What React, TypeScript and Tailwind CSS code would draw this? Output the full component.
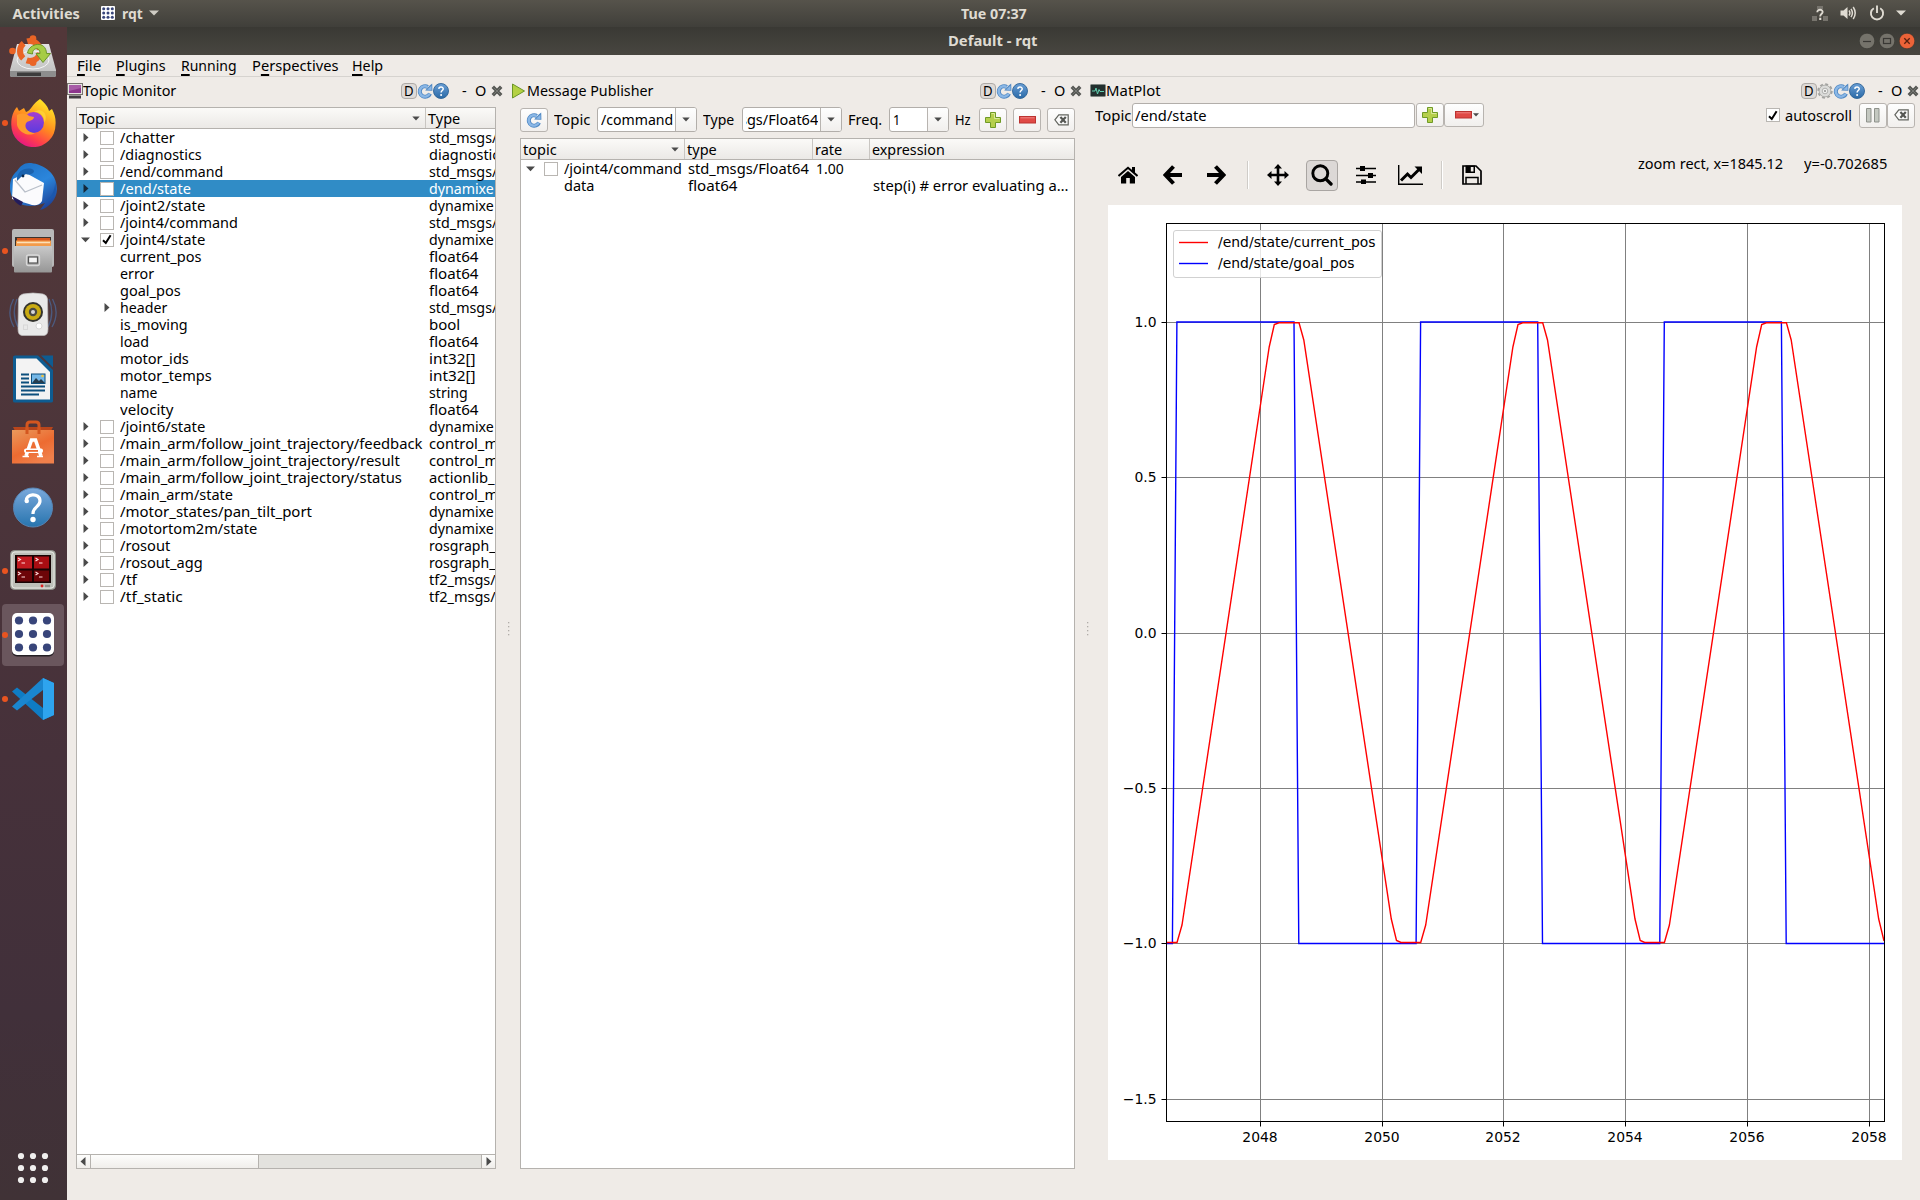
import { useLayoutEffect, useRef, useState, type ReactNode } from "react";

/* Text squeezed or stretched horizontally to a known advance width. */
function Fit({ w, className = "", children }: { w: number; className?: string; children: ReactNode }) {
  const ref = useRef<HTMLSpanElement>(null);
  const [scale, setScale] = useState(1);
  useLayoutEffect(() => {
    if (ref.current && ref.current.offsetWidth > 0) setScale(w / ref.current.offsetWidth);
  }, [w]);
  return (
    <span className={"inline-block shrink-0 whitespace-pre " + className} style={{ width: w }}>
      <span ref={ref} className="inline-block origin-left" style={{ transform: `scaleX(${scale})` }}>
        {children}
      </span>
    </span>
  );
}

/* ---------- small icons ---------- */

function Refresh({ size = 16 }: { size?: number }) {
  return (
    <svg width={size} height={size} viewBox="0 0 16 16" className="shrink-0">
      <path d="M13 10.6A5.3 5.3 0 1 1 10.8 3.9" fill="none" stroke="#4d86c2" strokeWidth="4" />
      <path d="M8.2 7.6L15.4 7.8L15.2 0.6L12.8 2.6Z" fill="#4d86c2" />
      <path d="M12.6 10.7A5.2 5.2 0 1 1 10.6 4" fill="none" stroke="#8ab7e6" strokeWidth="2.4" />
      <path d="M10 6.8L14.600 7L14.500 2.400Z" fill="#8ab7e6" />
    </svg>
  );
}

function HelpBall() {
  return (
    <svg width="16" height="16" viewBox="0 0 16 16" className="shrink-0">
      <defs>
        <linearGradient id="hb" x1="0" y1="0" x2="0" y2="1">
          <stop offset="0" stopColor="#6a9fd6" />
          <stop offset="1" stopColor="#2a69a6" />
        </linearGradient>
      </defs>
      <circle cx="8" cy="8" r="7.5" fill="url(#hb)" stroke="#2f6497" strokeWidth="0.9" />
      <path d="M5.8 5.9C5.9 3.4 10.3 3.4 10.2 6C10.1 7.6 8.1 7.6 8.1 9.6" fill="none" stroke="#fff" strokeWidth="1.5" />
      <circle cx="8.1" cy="11.9" r="1" fill="#fff" />
    </svg>
  );
}

function CrossIcon() {
  return (
    <svg width="12" height="12" viewBox="0 0 12 12" className="shrink-0">
      <path d="M1.8 1.8L10.2 10.2M10.2 1.8L1.8 10.2" stroke="#555753" strokeWidth="3.5" />
      <path d="M2.6 2.6L9.4 9.4M9.4 2.6L2.6 9.4" stroke="#777975" strokeWidth="1" />
    </svg>
  );
}

function Gear() {
  return (
    <svg width="16" height="16" viewBox="0 0 16 16" className="shrink-0">
      <circle cx="8" cy="8" r="6.6" fill="none" stroke="#a3a3a0" strokeWidth="2.2" strokeDasharray="2.9 2.283" />
      <circle cx="8" cy="8" r="5.9" fill="#dcdcda" stroke="#a8a8a5" strokeWidth="0.9" />
      <circle cx="8" cy="8" r="2.8" fill="#efefed" stroke="#a4a4a2" strokeWidth="0.8" />
      <circle cx="8" cy="8" r="1" fill="#8f8f8d" />
    </svg>
  );
}

function Plus() {
  return (
    <svg width="18" height="18" viewBox="0 0 18 18">
      <path d="M6.5 1.5h5v5h5v5h-5v5h-5v-5h-5v-5h5z" fill="#b5cf4c" stroke="#6f9a26" />
      <path d="M7.5 2.5h3v5h5" fill="none" stroke="#dbe89a" />
    </svg>
  );
}

function Minus() {
  return (
    <svg width="17" height="8" viewBox="0 0 17 8">
      <rect x="0.5" y="0.5" width="16" height="6.5" fill="#e04a46" stroke="#bb3330" />
      <path d="M1.5 1.8h14" stroke="#ee8280" />
    </svg>
  );
}

function ClearIcon() {
  return (
    <svg width="15" height="12" viewBox="0 0 15 12">
      <path d="M4.8 0.8H14.2V10.8H4.8L0.9 5.8Z" fill="#fafafa" stroke="#63655f" strokeWidth="1.2" />
      <path d="M6.4 3L11.8 8.8M11.8 3L6.4 8.8" stroke="#555753" strokeWidth="2.2" />
    </svg>
  );
}

function Check({ on = false }: { on?: boolean }) {
  return (
    <span className="box-border inline-flex h-3.5 w-3.5 shrink-0 items-center justify-center border border-[#b9b6b2] bg-white">
      {on && (
        <svg width="10" height="11" viewBox="0 0 10 11">
          <path d="M1 6.2L3.8 9L8.6 1.2" fill="none" stroke="#000" strokeWidth="2" />
        </svg>
      )}
    </span>
  );
}

function Tri({ dir, dark = false }: { dir: "r" | "d" | "l"; dark?: boolean }) {
  const d = { r: "M2.5 0L7.5 4.5L2.5 9Z", d: "M0 2.5H9L4.5 7.2Z", l: "M6.5 0L1.5 4.5L6.5 9Z" }[dir];
  return (
    <svg width="9" height="9" viewBox="0 0 9 9" className="shrink-0">
      <path d={d} fill={dark ? "#14293a" : "#4a4a4a"} />
    </svg>
  );
}

function SmallDown() {
  return (
    <svg width="8" height="5" viewBox="0 0 8 5" className="shrink-0">
      <path d="M0.3 0.4H7.7L4 4.6Z" fill="#4a4a4a" />
    </svg>
  );
}

/* ---------- dock ---------- */

const dockIcons: { running?: boolean; active?: boolean; icon: ReactNode }[] = [
  {
    icon: (
      <svg width="48" height="48" viewBox="0 0 48 48">
        <defs>
          <linearGradient id="disk" x1="0" y1="0" x2="0" y2="1">
            <stop offset="0" stopColor="#e2e2e2" />
            <stop offset="1" stopColor="#bcbcbc" />
          </linearGradient>
        </defs>
        <path d="M8 9H40L47 35V40Q47 42 45 42H3Q1 42 1 40V35Z" fill="url(#disk)" />
        <path d="M1 36H47V40Q47 42 45 42H3Q1 42 1 40Z" fill="#8d8d8d" />
        <rect x="8" y="37.5" width="24" height="3.5" fill="#3c3c3c" />
        <ellipse cx="24" cy="25" rx="16" ry="9" fill="none" stroke="#f5f5f5" strokeWidth="1" />
        <circle cx="21" cy="16" r="10" fill="none" stroke="#ea6425" strokeWidth="6" strokeDasharray="17 4" strokeDashoffset="-2" />
        <circle cx="24" cy="3.5" r="3.3" fill="#ea6425" />
        <circle cx="3.5" cy="16" r="3.3" fill="#ea6425" />
        <circle cx="24" cy="27.5" r="3.5" fill="#ea6425" />
        <path d="M18.5 18C20 8 37 5 37.5 18.5H41.5L34 27.5L27 18.5H31C31 11 23 13 23.5 19Z" fill="#a6cc45" stroke="#6b9628" />
      </svg>
    ),
  },
  {
    running: true,
    icon: (
      <svg width="48" height="48" viewBox="0 0 48 48">
        <defs>
          <linearGradient id="ff" x1="0.8" y1="0.1" x2="0.3" y2="1">
            <stop offset="0" stopColor="#ffe226" />
            <stop offset="0.45" stopColor="#ff8a1f" />
            <stop offset="0.75" stopColor="#ff3f4b" />
            <stop offset="1" stopColor="#e31587" />
          </linearGradient>
          <linearGradient id="ffp" x1="0.5" y1="0" x2="0.5" y2="1">
            <stop offset="0" stopColor="#a63fd0" />
            <stop offset="1" stopColor="#5a3be0" />
          </linearGradient>
        </defs>
        <path d="M31 0C37 5 39 8 40 12L43 10C46 16 47 20 46.500 26A22 22 0 0 1 2.300 26C2 19 4 12 8 8L10 12L15 9L17 13C22 12 23 5 31 0Z" fill="url(#ff)" />
        <circle cx="24.500" cy="23.500" r="10.500" fill="url(#ffp)" />
        <path d="M8 16C13 14 17 14 20 17L25 18C25 21 20 22 18 23C14 27 18 34 26 34C20 38 10 34 8 26Z" fill="#ff9a2c" />
        <path d="M24 13C30 12 36 17 35.500 24C39 15 35 12 30 11Z" fill="#ffcf34" />
      </svg>
    ),
  },
  {
    icon: (
      <svg width="48" height="48" viewBox="0 0 48 48">
        <defs>
          <linearGradient id="tb" x1="0.2" y1="0" x2="0.8" y2="1">
            <stop offset="0" stopColor="#1f70c4" />
            <stop offset="0.5" stopColor="#2b86dc" />
            <stop offset="1" stopColor="#1d3e93" />
          </linearGradient>
        </defs>
        <path d="M20 0C31 0 48 8 48 26C48 36 40 45 31 47L36 40C20 46 8 42 3 34C-1 24 1 14 8 8C11 3 15 0 20 0Z" fill="url(#tb)" />
        <path d="M4 16L17 10L35 20L33 38C30 43 25 43 20 41L3 36Z" fill="#fbfbfd" />
        <path d="M6 17L16 29L33 22" fill="none" stroke="#b9bfc9" strokeWidth="1.300" />
        <path d="M8 18C7 8 16 4 23 6C29 9 20 13 17 11L12 14Z" fill="#1b62ae" />
        <circle cx="14" cy="13" r="1.400" fill="#0d2a4d" />
        <path d="M3 33L14 39L12 43C8 41 5 38 3 33Z" fill="#231c5c" />
        <path d="M46 16C47 26 43 34 36 39C42 38 46 33 47 27" fill="#1a58ae" />
      </svg>
    ),
  },
  {
    running: true,
    icon: (
      <svg width="48" height="48" viewBox="0 0 48 48">
        <defs>
          <linearGradient id="cab" x1="0" y1="0" x2="0" y2="1">
            <stop offset="0" stopColor="#c9c9c9" />
            <stop offset="1" stopColor="#969696" />
          </linearGradient>
        </defs>
        <rect x="3" y="2" width="42" height="38" rx="2" fill="#b8b8b8" />
        <rect x="6" y="10" width="36" height="12" fill="#3b332e" />
        <rect x="8" y="11" width="33" height="3" fill="#d8581e" />
        <rect x="7" y="13.500" width="35" height="6" fill="#f39b4a" />
        <path d="M8 15.500H41" stroke="#fce0b8" strokeWidth="1.500" />
        <rect x="5" y="19" width="38" height="26.500" rx="1" fill="url(#cab)" />
        <rect x="17.500" y="28" width="13" height="10.500" rx="2" fill="none" stroke="#d7d7d7" strokeWidth="1.300" />
        <rect x="19.500" y="30" width="9" height="6" fill="#f4f4f4" stroke="#555" strokeWidth="1.200" />
      </svg>
    ),
  },
  {
    icon: (
      <svg width="48" height="48" viewBox="0 0 48 48">
        <g fill="none" stroke="#4c5b80" strokeWidth="1.300">
          <path d="M8 8Q2 22 9 36M4.500 8Q-3 22 5 36M40 8Q46 22 39 36M43.500 8Q51 22 43 36" />
        </g>
        <path d="M14 3Q24 1 34 3Q38 4 38.500 8L39 38Q39 44 35 44.500H13Q9 44 9 38L9.500 8Q10 4 14 3Z" fill="#e9e9e9" stroke="#bdbdbd" strokeWidth="0.700" />
        <circle cx="24" cy="21" r="10" fill="#33332e" />
        <circle cx="24" cy="21" r="8" fill="#c9ab12" />
        <circle cx="24" cy="21" r="4.200" fill="#4a4a43" />
        <circle cx="24" cy="21" r="2" fill="#d8d8d8" />
        <circle cx="30" cy="35" r="3" fill="#fff" stroke="#d0d0d0" strokeWidth="0.800" />
        <rect x="14.500" y="34" width="4" height="4.500" fill="none" stroke="#d8d8d8" />
      </svg>
    ),
  },
  {
    icon: (
      <svg width="48" height="48" viewBox="0 0 48 48">
        <path d="M4 2Q4 0.500 6 0.500H29L44 15V46Q44 47.500 42 47.500H6Q4 47.500 4 46Z" fill="#0e5c91" />
        <path d="M7 3.500H27.500L41 17V44.500H7Z" fill="#f3f3f3" />
        <path d="M32 0.500H44V12.500Z" fill="#0e5c91" />
        <g stroke="#0c4f7d" strokeWidth="1.800">
          <path d="M12 19.500H20M12 23.500H20M12 27.500H20M12 31.500H36M12 35.500H36M12 39.500H30" />
        </g>
        <rect x="22.500" y="19" width="13.500" height="9.500" fill="#74b7e6" stroke="#0c4f7d" />
        <path d="M23 28L27 23L30 26L32 24L36 28Z" fill="#263d4e" />
        <circle cx="33.500" cy="21" r="1.300" fill="#f3c33b" />
      </svg>
    ),
  },
  {
    icon: (
      <svg width="48" height="48" viewBox="0 0 48 48">
        <defs>
          <linearGradient id="bag" x1="0" y1="0" x2="0.600" y2="1">
            <stop offset="0" stopColor="#e99a5c" />
            <stop offset="0.600" stopColor="#ed6b31" />
            <stop offset="1" stopColor="#f0804b" />
          </linearGradient>
        </defs>
        <path d="M4 8H44L42 12H6Z" fill="#b8451b" />
        <path d="M18 12V6Q18 3 21 3H27Q30 3 30 6V12" fill="none" stroke="#d4561f" strokeWidth="3" />
        <path d="M3 11H45V44.500H3Z" fill="url(#bag)" />
        <path d="M18 15V9M30 15V9" stroke="#d4561f" strokeWidth="3" />
        <path d="M17 37L22.500 21H26.500L32 37" fill="none" stroke="#fff" strokeWidth="3.600" />
        <rect x="15" y="29.500" width="19" height="4.500" rx="2" fill="#fff" />
        <rect x="17" y="31" width="12" height="1.800" fill="#ed6b31" />
        <path d="M13.500 37.500H20M28 37.500H34" stroke="#fff" strokeWidth="1.600" />
      </svg>
    ),
  },
  {
    icon: (
      <svg width="48" height="48" viewBox="0 0 48 48">
        <defs>
          <linearGradient id="hp" x1="0" y1="0" x2="0" y2="1">
            <stop offset="0" stopColor="#7aa9dc" />
            <stop offset="1" stopColor="#2774ae" />
          </linearGradient>
        </defs>
        <circle cx="24" cy="24.500" r="19.500" fill="url(#hp)" stroke="#5784b3" />
        <path d="M17.500 19C15.500 10.500 31 9 31 18C31 24 23.500 24 24 31" fill="none" stroke="#fff" strokeWidth="3.200" />
        <circle cx="17.800" cy="18" r="2.200" fill="#fff" />
        <circle cx="24" cy="36.500" r="2.700" fill="#fff" />
      </svg>
    ),
  },
  {
    running: true,
    icon: (
      <svg width="48" height="48" viewBox="0 0 48 48">
        <rect x="1.500" y="3.500" width="45" height="39" rx="4" fill="#bdbfb8" stroke="#8c8e87" />
        <rect x="3" y="5" width="42" height="36" rx="3" fill="none" stroke="#e5e6e1" />
        <rect x="6" y="8" width="36" height="28" fill="#170404" />
        <rect x="8" y="9.500" width="15" height="12" fill="#c21a20" />
        <rect x="25" y="9.500" width="15" height="12" fill="#a80d12" />
        <rect x="8" y="23.500" width="15" height="11" fill="#6d0508" />
        <rect x="25" y="23.500" width="15" height="11" fill="#6d0508" />
        <g stroke="#ffdcdc" strokeWidth="1.100" fill="none">
          <path d="M9 11l2.500 1.500L9 14M12.500 16H16M26.500 11l2.500 1.500L26.500 14M30 16H33.500M9 25l2.500 1.500L9 28M12.500 30H16M26.500 25l2.500 1.500L26.500 28M30 30H33.500" />
        </g>
        <circle cx="33" cy="39" r="1.400" fill="#e02020" />
        <rect x="36" y="37.800" width="5" height="2.400" fill="#8f918a" />
      </svg>
    ),
  },
  {
    running: true,
    active: true,
    icon: (
      <svg width="48" height="48" viewBox="0 0 48 48">
        <rect x="3" y="2.500" width="42" height="43" rx="5" fill="#241f24" />
        <rect x="3" y="2" width="42" height="42" rx="5" fill="#fff" />
        {[10, 24, 38].map((x) => [9.5, 23, 36.500].map((y) => <circle key={x + "-" + y} cx={x} cy={y} r="4.100" fill="#38457a" />))}
      </svg>
    ),
  },
  {
    running: true,
    icon: (
      <svg width="48" height="48" viewBox="0 0 48 48">
        <path d="M34 3L45 8V40L34 45L3 16.500L8 12.500L34 33Z" fill="#0f7cc4" />
        <path d="M34 3L3 31.500L8 35.500L34 15Z" fill="#1a86cf" />
        <path d="M34 3L45 8V40L34 45Z" fill="#2ea4ee" />
      </svg>
    ),
  },
];

function Dock() {
  return (
    <aside className="flex w-[67px] shrink-0 flex-col bg-[linear-gradient(180deg,#523739_0%,#4e363a_30%,#46313a_62%,#41303a_84%,#403236_100%)]">
      {dockIcons.map((d, i) => (
        <div key={i} className="flex h-16 items-center">
          <span className={"ml-0.5 h-1.5 w-1.5 rounded-full " + (d.running ? "relative z-10 bg-[#e95420]" : "")} />
          <span
            className={
              "-ml-1.5 flex h-[62px] w-[62px] items-center justify-center rounded " + (d.active ? "bg-[#6a565d]" : "")
            }
          >
            {d.icon}
          </span>
        </div>
      ))}
      <div className="mt-auto mr-0.5 mb-4 flex justify-center">
        <svg width="32" height="32" viewBox="0 0 32 32">
          {[4, 16, 28].map((x) => [4, 16, 28].map((y) => <circle key={x + "-" + y} cx={x} cy={y} r="3.100" fill="#f0efee" />))}
        </svg>
      </div>
    </aside>
  );
}

/* ---------- top bar ---------- */

function TopBar() {
  return (
    <header className="flex h-[27px] items-center bg-[linear-gradient(180deg,#56534b,#403f3a)] pb-px text-[14.5px] font-bold text-[#dfdbd2]">
      <Fit w={67} className="ml-[12.5px]">Activities</Fit>
      <svg width="14" height="14" viewBox="0 0 14 14" className="ml-[21.5px]">
        <rect width="14" height="14" rx="1" fill="#fff" />
        {[2.7, 7, 11.300].map((x) => [2.7, 7, 11.300].map((y) => <circle key={x + "-" + y} cx={x} cy={y} r="1.500" fill="#38457a" />))}
      </svg>
      <Fit w={21} className="ml-[7px]">rqt</Fit>
      <svg width="10" height="6" viewBox="0 0 10 6" className="ml-1.5">
        <path d="M0 0.500H10L5 5.500Z" fill="#cfccc4" />
      </svg>
      <Fit w={66} className="ml-[802px]">Tue 07:37</Fit>
      <div className="ml-auto flex items-center">
        <svg width="17" height="17" viewBox="0 0 17 17">
          <path d="M0 11h5v5H0zM11 11h5v5h-5zM5 1h6v3H5z" fill="#77746d" />
          <path d="M5.300 7.300C5.300 3.700 11 4 10.600 7.200C10.300 9.200 8.200 9 8.200 11.400" fill="none" stroke="#dfdbd2" strokeWidth="1.900" />
          <rect x="7.200" y="12.700" width="2.100" height="2.300" fill="#dfdbd2" />
        </svg>
        <svg width="17" height="16" viewBox="0 0 17 16" className="ml-[11px]">
          <path d="M0.500 5.500H3.500L7.500 2V14L3.500 10.500H0.500Z" fill="#dfdbd2" />
          <path d="M9 5.500Q10.800 8 9 10.500M11 3.800Q13.800 8 11 12.200M13.200 2Q17.200 8 13.200 14" fill="none" stroke="#dfdbd2" strokeWidth="1.500" />
        </svg>
        <svg width="16" height="16" viewBox="0 0 16 16" className="ml-3">
          <path d="M4.800 3.200A6.100 6.100 0 1 0 11.200 3.200M8 0.500V8" fill="none" stroke="#dfdbd2" strokeWidth="1.900" />
        </svg>
        <svg width="10" height="6" viewBox="0 0 10 6" className="mr-[14px] ml-[11px]">
          <path d="M0 0.500H10L5 5.500Z" fill="#dfdbd2" />
        </svg>
      </div>
    </header>
  );
}

function TitleBar() {
  return (
    <div className="flex h-7 items-center bg-[linear-gradient(180deg,#3a3934,#484640)] pb-px text-[14.5px] font-bold text-[#dfdbd2]">
      <Fit w={89} className="ml-[881px]">Default - rqt</Fit>
      <div className="mr-[5px] ml-auto flex gap-1">
        <svg width="16" height="18" viewBox="0 0 16 18">
          <circle cx="8" cy="9" r="7.800" fill="#75736b" stroke="#33322e" strokeWidth="0.600" />
          <path d="M4 9.500H12" stroke="#393834" strokeWidth="1.200" />
        </svg>
        <svg width="16" height="18" viewBox="0 0 16 18">
          <circle cx="8" cy="9" r="7.800" fill="#75736b" stroke="#33322e" strokeWidth="0.600" />
          <rect x="4.500" y="6.500" width="7" height="5" fill="none" stroke="#393834" strokeWidth="1.200" />
        </svg>
        <svg width="16" height="18" viewBox="0 0 16 18">
          <circle cx="8" cy="9" r="7.800" fill="#ec6338" stroke="#33322e" strokeWidth="0.600" />
          <path d="M5.300 6.300L10.700 11.700M10.700 6.300L5.300 11.700" stroke="#57200f" strokeWidth="1.300" />
        </svg>
      </div>
    </div>
  );
}

const U = ({ children }: { children: string }) => (
  <span className="underline decoration-[1.5px] underline-offset-[3px]">{children}</span>
);

function MenuBar() {
  return (
    <nav className="flex h-[22px] items-center border-b border-[#d6d3cf] pl-2.5">
      <Fit w={24}><U>F</U>ile</Fit>
      <Fit w={49.5} className="ml-[15px]"><U>P</U>lugins</Fit>
      <Fit w={56} className="ml-[15px]"><U>R</U>unning</Fit>
      <Fit w={86} className="ml-[15px]">P<U>e</U>rspectives</Fit>
      <Fit w={31.5} className="ml-3.5"><U>H</U>elp</Fit>
    </nav>
  );
}

/* ---------- dock widget title ---------- */

function PanelTitle({ icon, title, w, gear = false }: { icon: ReactNode; title: string; w: number; gear?: boolean }) {
  return (
    <div className="flex h-[27px] items-center">
      {icon}
      <Fit w={w}>{title}</Fit>
      <span className="ml-auto flex h-4 w-4 items-center justify-center rounded-sm border border-[#aeaaa6] bg-[#dedad7]">
        <Fit w={10}>D</Fit>
      </span>
      {gear && <Gear />}
      <Refresh />
      <HelpBall />
      <Fit w={5} className="ml-[13px]">-</Fit>
      <Fit w={11} className="mr-[5px] ml-2">O</Fit>
      <CrossIcon />
    </div>
  );
}

/* ---------- topic monitor ---------- */

type Row = { name: string; w: number; type: string; tw: number; kind?: "child" | "childOpen" | "open"; selected?: boolean };

const rows: Row[] = [
  { name: "/chatter", w: 54.7, type: "std_msgs/", tw: 68 },
  { name: "/diagnostics", w: 82, type: "diagnostic", tw: 70 },
  { name: "/end/command", w: 103.5, type: "std_msgs/", tw: 68 },
  { name: "/end/state", w: 71.5, type: "dynamixe", tw: 64.5, selected: true },
  { name: "/joint2/state", w: 85, type: "dynamixe", tw: 64.5 },
  { name: "/joint4/command", w: 117.5, type: "std_msgs/", tw: 68 },
  { name: "/joint4/state", w: 85, type: "dynamixe", tw: 64.5, kind: "open" },
  { name: "current_pos", w: 81.5, type: "float64", tw: 49, kind: "child" },
  { name: "error", w: 34.5, type: "float64", tw: 49, kind: "child" },
  { name: "goal_pos", w: 61, type: "float64", tw: 49, kind: "child" },
  { name: "header", w: 47, type: "std_msgs/", tw: 68, kind: "childOpen" },
  { name: "is_moving", w: 67.5, type: "bool", tw: 31, kind: "child" },
  { name: "load", w: 29.5, type: "float64", tw: 49, kind: "child" },
  { name: "motor_ids", w: 68.5, type: "int32[]", tw: 46.5, kind: "child" },
  { name: "motor_temps", w: 92, type: "int32[]", tw: 46.5, kind: "child" },
  { name: "name", w: 37.5, type: "string", tw: 39, kind: "child" },
  { name: "velocity", w: 53, type: "float64", tw: 49, kind: "child" },
  { name: "/joint6/state", w: 85, type: "dynamixe", tw: 64.5 },
  { name: "/main_arm/follow_joint_trajectory/feedback", w: 303, type: "control_m", tw: 69 },
  { name: "/main_arm/follow_joint_trajectory/result", w: 279.5, type: "control_m", tw: 69 },
  { name: "/main_arm/follow_joint_trajectory/status", w: 282, type: "actionlib_", tw: 66 },
  { name: "/main_arm/state", w: 113, type: "control_m", tw: 69 },
  { name: "/motor_states/pan_tilt_port", w: 192, type: "dynamixe", tw: 64.5 },
  { name: "/motortom2m/state", w: 137, type: "dynamixe", tw: 64.5 },
  { name: "/rosout", w: 50.5, type: "rosgraph_", tw: 66 },
  { name: "/rosout_agg", w: 82.5, type: "rosgraph_", tw: 66 },
  { name: "/tf", w: 17.5, type: "tf2_msgs/", tw: 67 },
  { name: "/tf_static", w: 62.5, type: "tf2_msgs/", tw: 67 },
];

function TopicMonitor() {
  return (
    <section className="flex w-[436px] shrink-0 flex-col">
      <PanelTitle
        title="Topic Monitor"
        w={93.5}
        icon={
          <svg width="16" height="16" viewBox="0 0 16 16">
            <rect x="0.500" y="0.500" width="15" height="11" fill="#e6e3e1" stroke="#77736f" />
            <rect x="2" y="2" width="12" height="8" fill="#8c358c" />
            <path d="M2 2H14V5L2 8Z" fill="#a75ba7" />
            <rect x="2" y="12.500" width="12" height="3" fill="#413d41" />
          </svg>
        }
      />
      <div className="mt-[3px] ml-[9px] flex h-[1062px] w-[420px] flex-col overflow-hidden border border-[#b5b2ae] bg-white">
        <div className="flex h-[21px] shrink-0 items-center border-b border-[#b5b2ae] bg-[linear-gradient(180deg,#fbfaf8,#ebe9e6)]">
          <div className="flex h-full w-[349px] items-center justify-between border-r border-[#c9c6c2] pr-[5px] pl-0.5">
            <Fit w={35.5}>Topic</Fit>
            <SmallDown />
          </div>
          <Fit w={32} className="ml-0.5">Type</Fit>
        </div>
        {rows.map((r) => (
          <div
            key={r.name}
            className={"flex h-[17px] shrink-0 items-center " + (r.selected ? "bg-[#308cc6] text-white" : "")}
          >
            <span className="flex w-[43px] shrink-0 items-center pl-1">
              {r.kind === "childOpen" && (
                <span className="ml-[21px] flex"><Tri dir="r" /></span>
              )}
              {!r.kind?.startsWith("child") && (
                <>
                  <Tri dir={r.kind === "open" ? "d" : "r"} dark={r.selected} />
                  <span className="ml-2.5 flex"><Check on={r.kind === "open"} /></span>
                </>
              )}
            </span>
            <span className="flex w-[309px] shrink-0"><Fit w={r.w}>{r.name}</Fit></span>
            <Fit w={r.tw}>{r.type}</Fit>
          </div>
        ))}
        <div className="mt-auto flex h-[14px] shrink-0 border-t border-[#b5b2ae] bg-[#e3e2de]">
          <div className="flex w-3.5 items-center justify-center border-r border-[#b5b2ae] bg-[linear-gradient(180deg,#fdfdfc,#f0eeeb)]"><Tri dir="l" /></div>
          <div className="w-[168px] border-r border-[#b5b2ae] bg-[linear-gradient(180deg,#fdfdfc,#f0eeeb)]" />
          <div className="ml-auto flex w-3.5 items-center justify-center border-l border-[#b5b2ae] bg-[linear-gradient(180deg,#fdfdfc,#f0eeeb)] pr-px"><Tri dir="r" /></div>
        </div>
      </div>
    </section>
  );
}

/* ---------- message publisher ---------- */

const btn = "flex shrink-0 items-center justify-center rounded-[3px] border border-[#b8b4b0] bg-[linear-gradient(180deg,#fefefe,#f1efed)] ";

function Combo({ children, end = false, className }: { children: ReactNode; end?: boolean; className: string }) {
  return (
    <div className={"flex h-[25px] shrink-0 overflow-hidden rounded-[3px] border border-[#b2aeaa] bg-white " + className}>
      <div className={"mr-0.5 ml-[3px] flex min-w-0 flex-1 items-center overflow-hidden " + (end ? "justify-end" : "")}>{children}</div>
      <div className="flex w-[21px] shrink-0 items-center justify-center border-l border-[#b8b4b0] bg-[linear-gradient(180deg,#fefefe,#f1efed)] pr-px">
        <SmallDown />
      </div>
    </div>
  );
}

function Publisher() {
  return (
    <section className="ml-2 flex w-[571px] shrink-0 flex-col">
      <PanelTitle
        title="Message Publisher"
        w={126}
        icon={
          <svg width="15" height="16" viewBox="0 0 15 16" className="mr-[1px]">
            <path d="M1.500 1V15L13.500 8Z" fill="#b4d143" stroke="#6b9628" />
          </svg>
        }
      />
      <div className="ml-[9px] flex w-[555px] flex-col">
        <div className="mt-[3px] flex h-[25px] items-center">
          <div className={btn + "h-6 w-7"}><Refresh /></div>
          <Fit w={36} className="ml-[6px]">Topic</Fit>
          <Combo end className="ml-[7px] w-[100px]"><Fit w={72}>/command</Fit></Combo>
          <Fit w={31} className="ml-[6px]">Type</Fit>
          <Combo end className="ml-[8px] w-[100px]"><Fit w={78}>sgs/Float64</Fit></Combo>
          <Fit w={34} className="ml-[6px]">Freq.</Fit>
          <Combo className="ml-[7px] w-[60px]"><Fit w={7}>1</Fit></Combo>
          <Fit w={16} className="ml-[6px]">Hz</Fit>
          <div className={btn + "ml-[8px] h-6 w-7"}><Plus /></div>
          <div className={btn + "ml-[6px] h-6 w-7"}><Minus /></div>
          <div className={btn + "ml-[6px] h-6 w-7"}><ClearIcon /></div>
        </div>
        <div className="mt-[6px] flex h-[1031px] flex-col border border-[#b5b2ae] bg-white">
          <div className="flex h-[21px] shrink-0 items-center border-b border-[#b5b2ae] bg-[linear-gradient(180deg,#fbfaf8,#ebe9e6)]">
            <div className="flex h-full w-[164px] items-center justify-between border-r border-[#c9c6c2] pr-[5px] pl-0.5">
              <Fit w={34}>topic</Fit>
              <SmallDown />
            </div>
            <div className="flex h-full w-32 items-center border-r border-[#c9c6c2] pl-0.5"><Fit w={30}>type</Fit></div>
            <div className="flex h-full w-[57px] items-center border-r border-[#c9c6c2] pl-0.5"><Fit w={27}>rate</Fit></div>
            <Fit w={73} className="ml-0.5">expression</Fit>
          </div>
          <div className="flex h-[17px] items-center">
            <span className="flex w-[43px] items-center pl-[5px]">
              <Tri dir="d" />
              <span className="ml-[9px] flex"><Check /></span>
            </span>
            <span className="flex w-[124px]"><Fit w={117.5}>/joint4/command</Fit></span>
            <span className="flex w-[128px]"><Fit w={120.5}>std_msgs/Float64</Fit></span>
            <Fit w={28}>1.00</Fit>
          </div>
          <div className="flex h-[17px] items-center">
            <span className="ml-[43px] flex w-[124px]"><Fit w={30}>data</Fit></span>
            <span className="flex w-[185px]"><Fit w={49}>float64</Fit></span>
            <Fit w={195}>step(i) # error evaluating a…</Fit>
          </div>
        </div>
      </div>
    </section>
  );
}

/* ---------- MatPlot ---------- */

const currentPos =
  "M1166.500 942.500H1177" +
  [0, 243.7, 487.4]
    .map((o) =>
      [
        [1177, 942.5], [1182, 925], [1269.2, 347], [1274.3, 324.5], [1279, 322.8], [1299, 322.8], [1303.8, 340],
        [1391.3, 919], [1396.5, 940.5], [1401, 942.5],
      ]
        .map(([x, y]) => `L${x + o} ${y}`)
        .join("")
    )
    .join("");

const goalPos =
  "M1166.500 943.500" +
  [0, 243.7, 487.4]
    .map((o) => `L${1172.4 + o} 943.500L${1176.9 + o} 322L${1294 + o} 322L${1298.8 + o} 943.500`)
    .join("") +
  "L1884.500 943.500";

const xTicks: [number, string][] = [
  [1260.5, "2048"], [1382.5, "2050"], [1503.5, "2052"], [1625.5, "2054"], [1747.5, "2056"], [1869.5, "2058"],
];
const yTicks: [number, string][] = [
  [322.5, "1.0"], [477.5, "0.5"], [633.5, "0.0"], [788.5, "−0.5"], [943.5, "−1.0"], [1099.5, "−1.5"],
];

function Chart() {
  return (
    <svg width="794" height="955" viewBox="1108 205 794 955" className="ml-[18px] shrink-0 bg-white" fontFamily="DejaVu Sans" fontSize="13.900">
      <defs>
        <clipPath id="axes"><rect x="1166.500" y="223.500" width="718" height="898" /></clipPath>
      </defs>
      <g stroke="#808080" strokeWidth="1">
        {xTicks.map(([x]) => <path key={x} d={`M${x} 223.500V1121.500`} />)}
        {yTicks.map(([y]) => <path key={y} d={`M1166.500 ${y}H1884.500`} />)}
      </g>
      <g clipPath="url(#axes)" fill="none" strokeWidth="1.400">
        <path d={goalPos} stroke="#0000ff" />
        <path d={currentPos} stroke="#ff0000" />
      </g>
      <rect x="1166.500" y="223.500" width="718" height="898" fill="none" stroke="#000" />
      {xTicks.map(([x, t]) => (
        <g key={t}>
          <path d={`M${x} 1121.500v5`} stroke="#000" />
          <text x={x - 0.5} y="1142" textAnchor="middle">{t}</text>
        </g>
      ))}
      {yTicks.map(([y, t]) => (
        <g key={t}>
          <path d={`M1161.500 ${y}h5`} stroke="#000" />
          <text x="1156.500" y={y + 4.500} textAnchor="end">{t}</text>
        </g>
      ))}
      <rect x="1173.500" y="230.500" width="208" height="47" rx="2.500" fill="#fff" fillOpacity="0.800" stroke="#ccc" strokeOpacity="0.900" />
      <path d="M1179 242.500H1208" stroke="#ff0000" strokeWidth="1.400" />
      <path d="M1179 263.500H1208" stroke="#0000ff" strokeWidth="1.400" />
      <text x="1218" y="247" textLength="157.500">/end/state/current_pos</text>
      <text x="1218" y="268" textLength="136.500">/end/state/goal_pos</text>
    </svg>
  );
}

function PlotToolbar() {
  return (
    <div className="mt-[30px] flex h-[47px] items-center pb-[13px]">
      <svg width="20" height="18" viewBox="0 0 20 18" className="ml-7">
        <path d="M0.500 10L10 1.800L19.500 10" fill="none" stroke="#000" strokeWidth="2" />
        <path d="M14 1H17V7.500L14 5Z" />
        <path d="M10 5L17 11V17.500H11.800V12H8.200V17.500H3V11Z" />
      </svg>
      <svg width="20" height="20" viewBox="0 0 20 20" className="ml-[25px]">
        <path d="M10.500 1.500L2.500 10L10.500 18.500M3 10H19" fill="none" stroke="#000" strokeWidth="4" />
      </svg>
      <svg width="20" height="20" viewBox="0 0 20 20" className="ml-[22.500px]">
        <path d="M9.500 1.500L17.500 10L9.500 18.500M17 10H1" fill="none" stroke="#000" strokeWidth="4" />
      </svg>
      <span className="ml-[21.500px] h-7 w-0.5 border-l border-[#cfccc8] bg-white" />
      <svg width="22" height="22" viewBox="0 0 22 22" className="ml-[18px]">
        <path d="M11 3V19M3 11H19" stroke="#000" strokeWidth="2.600" />
        <path d="M11 0L15 4.500H7ZM11 22L7 17.500H15ZM0 11L4.500 7V15ZM22 11L17.500 15V7Z" />
      </svg>
      <span className="ml-[17px] flex h-[31px] w-8 items-center justify-center rounded-sm border border-[#a9a5a2] bg-[#dcd8d6]">
        <svg width="22" height="22" viewBox="0 0 22 22">
          <circle cx="9.300" cy="9.300" r="7.500" fill="none" stroke="#000" strokeWidth="2.900" />
          <path d="M14.800 14.800L20 20" stroke="#000" strokeWidth="3.300" strokeLinecap="round" />
        </svg>
      </span>
      <svg width="20" height="18" viewBox="0 0 20 18" className="ml-[18px]">
        <path d="M0 2.500H20M0 9.500H20M0 16H20" stroke="#000" strokeWidth="1.700" />
        <path d="M4 0h5v5H4zM12 7h5v5h-5zM5 13.500h5v4.500H5z" />
      </svg>
      <svg width="25" height="20" viewBox="0 0 25 20" className="ml-[21.500px]">
        <path d="M0.700 0V19.300H25" fill="none" stroke="#000" strokeWidth="1.400" />
        <path d="M3 15.500L9.500 9L13 12.500L21 4.500" fill="none" stroke="#000" strokeWidth="3" />
        <path d="M16.500 1.500H24V9Z" />
      </svg>
      <span className="ml-[18.500px] h-7 w-0.5 border-l border-[#cfccc8] bg-white" />
      <svg width="20" height="20" viewBox="0 0 20 20" className="ml-[19px]">
        <path d="M1 1H14L19 6V19H1Z" fill="none" stroke="#000" strokeWidth="1.700" />
        <path d="M3.500 0.500H13V8H3.500Z" />
        <rect x="8.800" y="2" width="2.700" height="4.500" fill="#efebe7" />
        <path d="M4 19V12.500H16V19" fill="none" stroke="#000" strokeWidth="1.500" />
      </svg>
      <Fit w={145} className="-mt-6 ml-auto">zoom rect, x=1845.12</Fit>
      <Fit w={83} className="-mt-6 mr-[33px] ml-[21px]">y=-0.702685</Fit>
    </div>
  );
}

function MatPlot() {
  return (
    <section className="ml-2 flex min-w-0 flex-1 flex-col">
      <div className="pr-px">
        <PanelTitle
          gear
          title="MatPlot"
          w={54.5}
          icon={
            <svg width="16" height="14" viewBox="0 0 16 14">
              <rect x="0.500" y="0.500" width="15" height="12" rx="1" fill="#23302f" stroke="#808783" />
              <path d="M2 7H5L6 4L7.500 10L9 5.500L10 7.500H14" fill="none" stroke="#62d0b0" />
            </svg>
          }
        />
      </div>
      <div className="-mt-0.5 flex h-[26px] items-center">
        <Fit w={36} className="ml-[5px]">Topic</Fit>
        <div className="ml-[1px] flex h-[25px] w-[283px] items-center rounded-[3px] border border-[#b2aeaa] bg-white pl-0.5"><Fit w={72}>/end/state</Fit></div>
        <div className={btn + "ml-px h-6 w-7"}><Plus /></div>
        <div className={btn + "h-6 w-10 pl-[5px]"}>
          <Minus />
          <svg width="6" height="4" viewBox="0 0 6 4" className="ml-[1px]"><path d="M0 0.300H6L3 3.500Z" fill="#4a4a4a" /></svg>
        </div>
        <div className="mr-[5px] ml-auto flex items-center">
          <Check on />
          <Fit w={67} className="mr-[7px] ml-[5px]">autoscroll</Fit>
          <div className={btn + "h-[25px] w-7"}>
            <svg width="14" height="15" viewBox="0 0 14 15">
              <path d="M0.500 0.500H5V14H0.500ZM8.500 0.500H13V14H8.500Z" fill="#c4c8c1" stroke="#8f928c" />
            </svg>
          </div>
          <div className={btn + "h-[25px] w-7"}><ClearIcon /></div>
        </div>
      </div>
      <PlotToolbar />
      <Chart />
    </section>
  );
}

const Grip = () => (
  <svg width="2" height="16" viewBox="0 0 2 16">
    {[1, 5, 9, 13].map((y) => <rect key={y} y={y} width="1.300" height="1.300" fill="#b0aca8" />)}
  </svg>
);

export default function App() {
  return (
    <div className="flex h-[1200px] w-[1920px] flex-col overflow-hidden bg-[#efebe7] font-['Noto_Sans','Open_Sans',sans-serif] text-[14.5px] leading-[17px] text-black">
      <TopBar />
      <div className="flex min-h-0 flex-1">
        <Dock />
        <main className="flex min-w-0 flex-1 flex-col">
          <TitleBar />
          <MenuBar />
          <div className="relative flex min-h-0 flex-1">
            <TopicMonitor />
            <Publisher />
            <MatPlot />
            <div className="absolute top-[544px] left-[441px]"><Grip /></div>
            <div className="absolute top-[544px] left-[1020px]"><Grip /></div>
          </div>
        </main>
      </div>
    </div>
  );
}
